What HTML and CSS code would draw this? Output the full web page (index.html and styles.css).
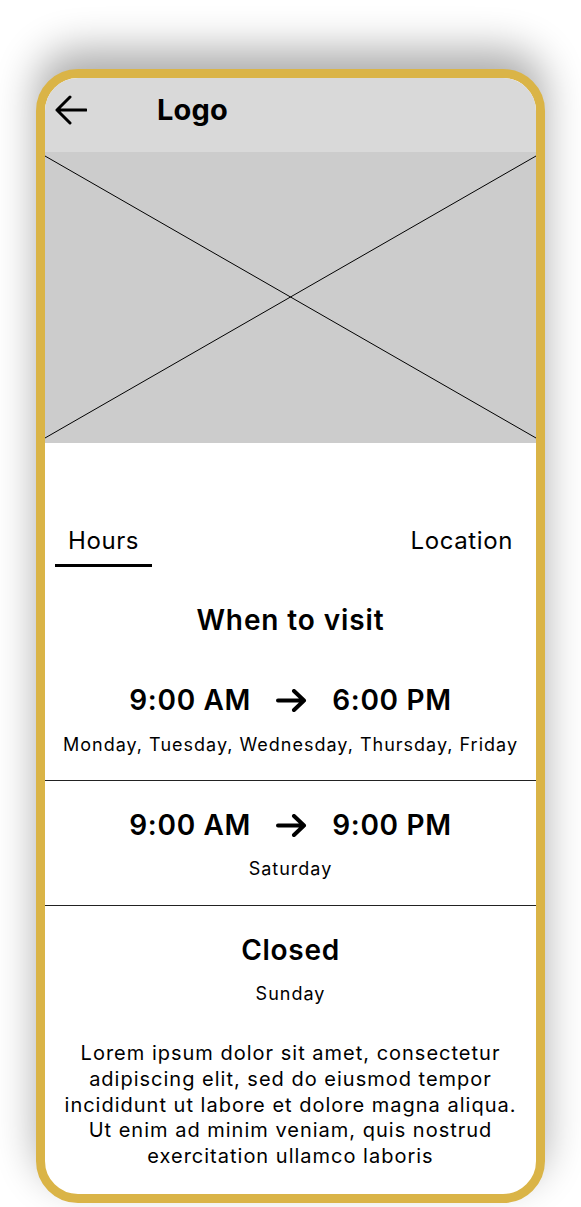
FILE: index.html
```html
<!DOCTYPE html>
<html lang="en">
<head>
<meta charset="utf-8">
<title>Hours</title>
<link rel="stylesheet" href="styles.css">
</head>
<body>
<div class="page">
  <div class="frame">
    <header class="header">
      <svg class="back" width="32" height="30" viewBox="0 0 32 30" aria-hidden="true">
        <path d="M31 15H2M15 2L2 15l13 13" fill="none" stroke="#000" stroke-width="3" stroke-linecap="round" stroke-linejoin="round"/>
      </svg>
      <div class="logo">Logo</div>
    </header>
    <div class="hero">
      <svg class="hero-x" viewBox="0 0 491 291" preserveAspectRatio="none" aria-hidden="true">
        <line x1="0" y1="4" x2="491" y2="286" stroke="#000" stroke-width="1"/>
        <line x1="0" y1="286" x2="491" y2="4" stroke="#000" stroke-width="1"/>
      </svg>
    </div>
    <nav class="tabs">
      <div class="tab tab-active">Hours</div>
      <div class="tab">Location</div>
    </nav>
    <h2 class="title">When to visit</h2>
    <section class="slot slot-first">
      <div class="time">
        <span>9:00 AM</span>
        <svg class="arrow" width="31" height="23" viewBox="0 0 31 23" aria-hidden="true">
          <path d="M2 11.5H28M18 2l10 9.5L18 21" fill="none" stroke="#000" stroke-width="4" stroke-linecap="round" stroke-linejoin="round"/>
        </svg>
        <span>6:00 PM</span>
      </div>
      <div class="days">Monday, Tuesday, Wednesday, Thursday, Friday</div>
    </section>
    <section class="slot slot-mid">
      <div class="time">
        <span>9:00 AM</span>
        <svg class="arrow" width="31" height="23" viewBox="0 0 31 23" aria-hidden="true">
          <path d="M2 11.5H28M18 2l10 9.5L18 21" fill="none" stroke="#000" stroke-width="4" stroke-linecap="round" stroke-linejoin="round"/>
        </svg>
        <span>9:00 PM</span>
      </div>
      <div class="days days-mid">Saturday</div>
    </section>
    <section class="slot slot-last">
      <div class="time">Closed</div>
      <div class="days days-last">Sunday</div>
    </section>
    <p class="lorem">Lorem ipsum dolor sit amet, consectetur adipiscing elit, sed do eiusmod tempor incididunt ut labore et dolore magna aliqua. Ut enim ad minim veniam, quis nostrud exercitation ullamco laboris</p>
  </div>
</div>
</body>
</html>
```
FILE: styles.css
```css
* { box-sizing: border-box; }
html, body { margin: 0; padding: 0; background: #fff; }
body { font-family: Inter, "Noto Sans", sans-serif; color: #000; }

.page {
  padding: 69px 36px 4px 36px;
}

.frame {
  width: 509px;
  height: 1134px;
  border: 9px solid #dab447;
  border-radius: 42px;
  overflow: hidden;
  background: #fff;
  box-shadow: 0 -20px 40px rgba(0, 0, 0, 0.32);
  display: flex;
  flex-direction: column;
}

.header {
  height: 74px;
  flex: none;
  background: #d9d9d9;
  display: flex;
  align-items: center;
  padding: 0 10px 10px;
  gap: 70px;
}
.back { display: block; flex: none; }
.logo {
  font-size: 29px;
  font-weight: 700;
  line-height: 34px;
  letter-spacing: 0.2px;
}

.hero {
  height: 291px;
  flex: none;
  background: #cccccc;
}
.hero-x { display: block; width: 100%; height: 100%; }

.tabs {
  display: flex;
  justify-content: space-between;
  padding: 0 10px;
  margin-top: 83px;
}
.tab {
  font-size: 24px;
  line-height: 29px;
  letter-spacing: 0.6px;
  padding: 0 13px 9px;
  border-bottom: 3px solid transparent;
}
.tab-active { border-bottom-color: #000; }

.title {
  margin: 36px 0 0;
  text-align: center;
  font-size: 28px;
  font-weight: 600;
  line-height: 34px;
  letter-spacing: 0.9px;
}

.slot {
  border-bottom: 1px solid #222;
  text-align: center;
}
.slot-first { padding: 45px 0 24px; }
.slot-mid { padding: 26px 0 25px; }
.slot-last { padding: 26px 0 0; border-bottom: none; }

.time {
  display: flex;
  justify-content: center;
  align-items: center;
  gap: 25px;
  font-size: 28px;
  font-weight: 600;
  line-height: 36px;
  letter-spacing: 0.7px;
}
.arrow { display: block; flex: none; }

.days {
  margin-top: 16px;
  font-size: 18px;
  line-height: 22px;
  letter-spacing: 1px;
}
.days-mid, .days-last { margin-top: 15px; }

.lorem {
  margin: 36px 0 0;
  padding: 0 16px;
  text-align: center;
  font-size: 20px;
  line-height: 25.8px;
  letter-spacing: 1px;
}
```
